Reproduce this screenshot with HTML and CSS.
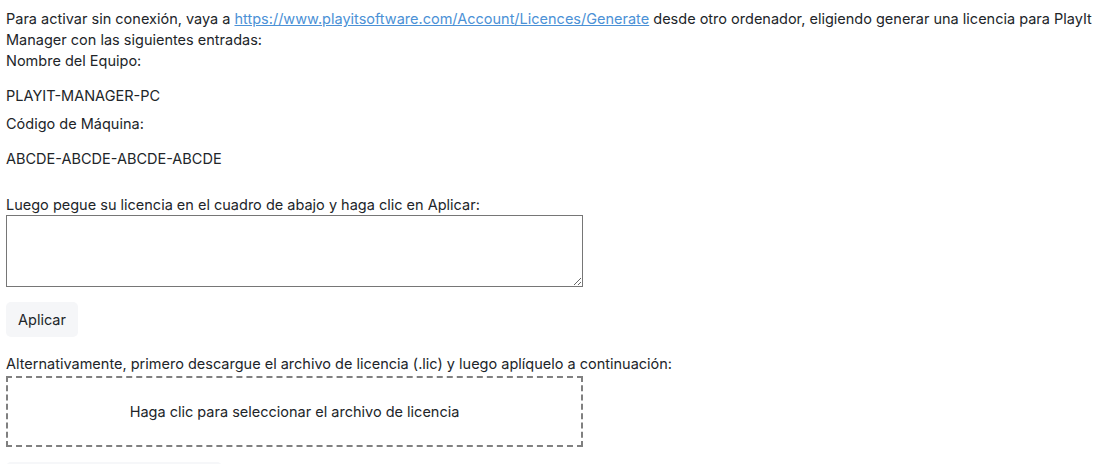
FILE: index.html
```html
<!DOCTYPE html>
<html lang="es">
<head>
<meta charset="utf-8">
<link rel="stylesheet" href="styles.css">
</head>
<body>
<div class="page">
  <div class="intro">Para activar sin conexión, vaya a <a href="#" class="link">https://www.playitsoftware.com/Account/Licences/Generate</a> desde otro ordenador, eligiendo generar una licencia para PlayIt Manager con las siguientes entradas:</div>
  <div class="label">Nombre del Equipo:</div>
  <p class="value">PLAYIT-MANAGER-PC</p>
  <div class="label label-gap">Código de Máquina:</div>
  <p class="value">ABCDE-ABCDE-ABCDE-ABCDE</p>
  <div class="label paste-label">Luego pegue su licencia en el cuadro de abajo y haga clic en Aplicar:</div>
  <textarea class="license-box"></textarea>
  <div class="actions"><button class="btn">Aplicar</button></div>
  <div class="label alt-label">Alternativamente, primero descargue el archivo de licencia (.lic) y luego aplíquelo a continuación:</div>
  <div class="dropzone">Haga clic para seleccionar el archivo de licencia</div>
  <div class="actions"><button class="btn btn-wide">&nbsp;</button></div>
</div>
</body>
</html>
```

FILE: styles.css
```css
* { box-sizing: border-box; }
html, body { margin: 0; padding: 0; background: #ffffff; }
body {
  font-family: Inter, "Noto Sans", Arial, sans-serif;
  font-size: 14.5px;
  line-height: 21px;
  color: #212529;
}
.page {
  padding: 8px 6px 0 6px;
  display: flex;
  flex-direction: column;
  align-items: flex-start;
}
.intro { width: 100%; }
.link { color: #4b91d6; text-decoration: underline; }
.value { margin: 14px 0 0 0; }
.label-gap { margin-top: 7px; }
.paste-label { margin-top: 25px; }
.license-box {
  display: block;
  width: 577px;
  height: 72px;
  margin: 0;
  border: 1px solid #767676;
  border-radius: 0;
  resize: vertical;
  font: inherit;
  padding: 2px;
}
.actions { margin-top: 15px; }
.btn {
  font: inherit;
  color: #212529;
  background: #f5f6f8;
  border: none;
  border-radius: 5px;
  padding: 7px 12px;
  height: 35px;
  cursor: pointer;
}
.btn-wide { width: 216px; background: #f6f7f9; }
.alt-label { margin-top: 16px; }
.dropzone {
  margin-top: 2px;
  width: 577px;
  height: 71px;
  border: 2px dashed #808080;
  display: flex;
  align-items: center;
  justify-content: center;
  cursor: pointer;
}
```
